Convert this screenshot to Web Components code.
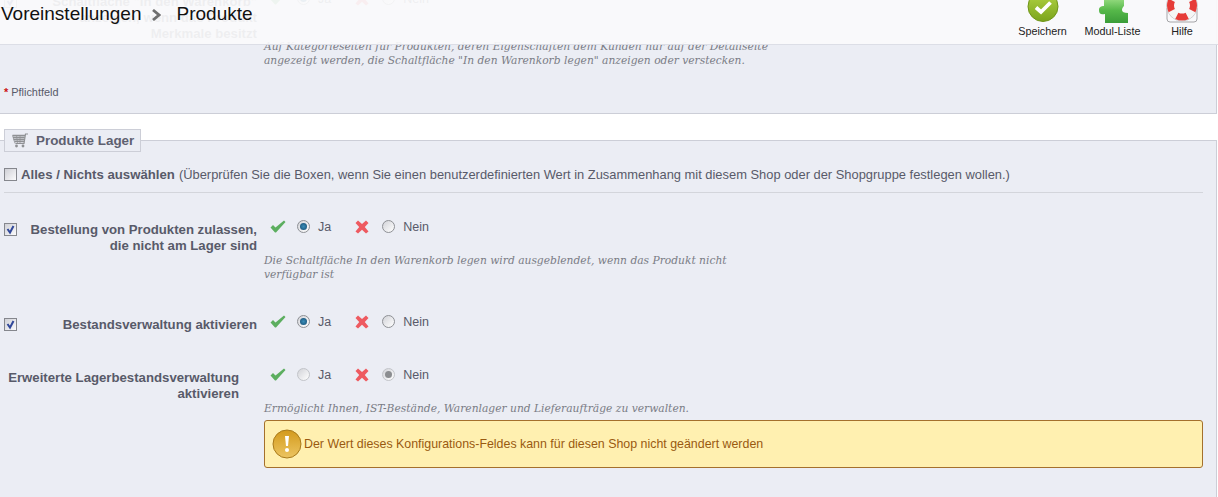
<!DOCTYPE html>
<html>
<head>
<meta charset="utf-8">
<title>Produkte</title>
<style>
  html, body { margin: 0; height: 497px; overflow: hidden; background: #fff; }
  body { font-family: "Liberation Sans", Arial, sans-serif; }
</style>
</head>
<body>
<admin-page>
  <page-toolbar slot="toolbar"></page-toolbar>
  <form-panel flush>
    <form-row checked top label="Schaltfläche &quot;In den Warenkorb&quot; anzeigen, wenn das Produkt<br>Merkmale besitzt" choice="yes" style="--hint-gap:33px"
      hint="Auf Kategorieseiten für Produkten, deren Eigenschaften dem Kunden nur auf der Detailseite angezeigt werden, die Schaltfläche &quot;In den Warenkorb legen&quot; anzeigen oder verstecken."></form-row>
    <required-note></required-note>
  </form-panel>
  <form-panel legend="Produkte Lager">
    <select-all></select-all>
    <form-row checked label="Bestellung von Produkten zulassen, die nicht am Lager sind" choice="yes"
      hint="Die Schaltfläche In den Warenkorb legen wird ausgeblendet, wenn das Produkt nicht verfügbar ist" style="margin-top:25px"></form-row>
    <form-row checked label="Bestandsverwaltung aktivieren" choice="yes" style="margin-top:31px"></form-row>
    <form-row disabled label="Erweiterte Lagerbestandsverwaltung aktivieren" choice="no"
      hint="Ermöglicht Ihnen, IST-Bestände, Warenlager und Lieferaufträge zu verwalten." style="margin-top:33px;--label-pad:18px">
      <warn-box>Der Wert dieses Konfigurations-Feldes kann für diesen Shop nicht geändert werden</warn-box>
    </form-row>
  </form-panel>
</admin-page>

<script>
class AdminPage extends HTMLElement {
  constructor() {
    super();
    this.attachShadow({ mode: 'open' });
    this.shadowRoot.innerHTML = `
      <style>
        :host { display: block; position: relative; height: 497px; overflow: hidden; }
        .content { display: flex; flex-direction: column; gap: 26px; width: 1217px; }
      </style>
      <slot name="toolbar"></slot>
      <div class="content"><slot></slot></div>
    `;
  }
}

class PageToolbar extends HTMLElement {
  constructor() {
    super();
    this.attachShadow({ mode: 'open' });
    this.shadowRoot.innerHTML = `
      <style>
        :host {
          position: absolute; top: 0; left: 0; right: 0; height: 44px; z-index: 5;
          background: rgba(250,250,251,.93); border-bottom: 1px solid #dcdee6;
          display: flex; justify-content: space-between;
        }
        .crumbs { display: flex; align-items: center; height: 28px; font-size: 19px; color: #111; padding-left: 1px; }
        .crumbs svg { margin: 2px 16px 0 9px; }
        .tools { display: flex; }
        .tool { display: flex; flex-direction: column; align-items: center; font-size: 10.8px; color: #222; }
        .tool svg { display: block; height: 23px; }
        .tool span { margin-top: 2px; line-height: 13px; white-space: nowrap; }
      </style>
      <div class="crumbs">Voreinstellungen
        <svg width="10" height="12" viewBox="0 0 10 12"><path d="M2 1 L8 6 L2 11" fill="none" stroke="#6f6f6f" stroke-width="2.8"/></svg>
        Produkte</div>
      <div class="tools">
        <div class="tool" style="width:59px;margin-right:11px">
          <svg width="32" viewBox="0 0 32 23"><defs><linearGradient id="g" x1="0" y1="0" x2="0" y2="1"><stop offset="0" stop-color="#b4d544"/><stop offset="1" stop-color="#7ba41d"/></linearGradient></defs>
            <circle cx="16" cy="6.5" r="15" fill="url(#g)" stroke="#6f9516"/>
            <path d="M9 7.5 L14 12 L23.5 2.5" fill="none" stroke="#fff" stroke-width="3.8"/></svg>
          <span>Speichern</span>
        </div>
        <div class="tool" style="width:59px;margin-right:11px">
          <svg width="32" viewBox="0 0 32 23"><defs><linearGradient id="p" x1="0" y1="0" x2="0" y2="1"><stop offset="0" stop-color="#8ed77a"/><stop offset=".45" stop-color="#56b84a"/><stop offset="1" stop-color="#3b9c38"/></linearGradient></defs>
            <path d="M7 0 H27 V6 C26 7 25 8 25 10 C25 12 27 13 31 13 V23 H8 V14 C4 15 2 14 2 10 C2 7 4 6 7 6 Z" fill="url(#p)"/></svg>
          <span>Modul-Liste</span>
        </div>
        <div class="tool" style="width:58px;margin-right:7px">
          <svg width="32" viewBox="0 0 32 23">
            <path d="M1 8 V19 Q1 22 4 22 H28 Q31 22 31 19 V8" fill="none" stroke="#a5a5a8"/>
            <circle cx="16" cy="5.5" r="15.5" fill="#f4f4f4" stroke="#b9b9bc" stroke-width=".7"/>
            <circle cx="16" cy="5.5" r="11.5" fill="#f8f8f9" stroke="#f5f5f5" stroke-width="7"/>
            <circle cx="16" cy="5.5" r="11.5" fill="none" stroke="#e63c38" stroke-width="7" pathLength="100" stroke-dasharray="15 10" stroke-dashoffset="7.5"/>
          </svg>
          <span>Hilfe</span>
        </div>
      </div>
    `;
  }
}

class FormPanel extends HTMLElement {
  constructor() {
    super();
    this.attachShadow({ mode: 'open' });
    const legend = this.getAttribute('legend');
    this.shadowRoot.innerHTML = `
      <style>
        :host {
          display: block; box-sizing: border-box; background: #ebedf4;
          border-top: 1px solid #ccced7; border-right: 1px solid #ccced7; border-bottom: 1px solid #ccced7;
          padding: 0 0 60px 4px; position: relative;
        }
        :host([flush]) { border-top: 0; height: 114px; overflow: hidden; padding-bottom: 0; }
        .legend {
          display: inline-flex; align-items: center; position: absolute; top: -12px; left: 4px;
          height: 23px; box-sizing: border-box; width: 137px; padding-left: 7px;
          background: #ebedf4; border: 1px solid #ccced7;
          font-size: 13.4px; font-weight: bold; color: #5e6070;
        }
        .legend svg { margin-right: 8px; }
        .legend[hidden] { display: none; }
      </style>
      <div class="legend" ${legend ? '' : 'hidden'}>
        <svg width="16" height="15" viewBox="0 0 16 15" fill="none" stroke="#8f9194">
          <path d="M16 1 H13.5 L12 10.5 H3.5" stroke-width="1.2"/>
          <path d="M0.5 2.5 H13 M1 4.5 H12.8 M1.5 6.5 H12.5 M2.5 8.5 H12.2" stroke-width="1.3"/>
          <path d="M0.5 2.5 L3 10.5 M4.5 2.5 L5.5 10 M8 2.5 L8 10" stroke-width=".7"/>
          <circle cx="4.5" cy="13" r="1.4" fill="#8f9194" stroke="none"/><circle cx="11" cy="13" r="1.4" fill="#8f9194" stroke="none"/>
        </svg>${legend || ''}
      </div>
      <slot></slot>
    `;
  }
}

class SelectAll extends HTMLElement {
  constructor() {
    super();
    this.attachShadow({ mode: 'open' });
    this.shadowRoot.innerHTML = `
      <style>
        :host {
          display: flex; align-items: center; box-sizing: border-box; height: 52px; padding-top: 16px;
          width: 1199px; border-bottom: 1px solid #d3d5db; font-size: 12.9px; color: #585a69;
          white-space: pre;
        }
        b { margin: 0 4px; font-size: 13.2px; }
      </style>
      <check-box></check-box><b>Alles / Nichts auswählen</b><span>(Überprüfen Sie die Boxen, wenn Sie einen benutzerdefinierten Wert in Zusammenhang mit diesem Shop oder der Shopgruppe festlegen wollen.)</span>
    `;
  }
}

class FormRow extends HTMLElement {
  constructor() {
    super();
    this.attachShadow({ mode: 'open' });
    const checked = this.hasAttribute('checked');
    const no = this.getAttribute('choice') === 'no';
    const off = this.hasAttribute('disabled');
    const hint = this.getAttribute('hint');
    this.shadowRoot.innerHTML = `
      <style>
        :host { display: grid; grid-template-columns: 253px 1fr; column-gap: 7px; color: #585a69; }
        :host([top]) { margin-top: -10px; }
        .label { display: flex; gap: 4px; }
        .label b { flex: 1; text-align: right; font-size: 13.2px; line-height: 16px; padding: 4px var(--label-pad, 0) 0 0; }
        check-box { margin-top: 5px; }
        .choice { display: flex; align-items: center; height: 17px; font-size: 12.5px; padding-left: 6px; margin-top: 0; }
        .choice .t { margin-left: 8px; }
        .choice svg { display: block; flex: none; }
        .hint {
          font-family: "DejaVu Serif", Georgia, serif; font-style: italic; font-size: 10.7px; line-height: 14px;
          color: #7a7c85; width: 515px; margin-top: var(--hint-gap, 19px);
        }
        .slot { width: 939px; }
      </style>
      <div class="label">
        ${checked ? '<check-box checked></check-box>' : ''}
        <b>${this.getAttribute('label').replace(/"/g, '&quot;')}</b>
      </div>
      <div>
        <div class="choice">
          <svg width="16" height="13" viewBox="0 0 16 13"><path d="M0.5 7.5 L3 5 L5.5 7.5 L14 0.5 L15.5 2 L6 12.5 L5 12.5 Z" fill="#5cae5f"/></svg>
          <radio-dot style="margin-left:11px" ${no ? '' : 'on'} ${off ? 'off' : ''}></radio-dot>
          <span class="t">Ja</span>
          <svg style="margin-left:24px" width="14" height="14" viewBox="0 0 14 14"><path d="M0.5 3 L3 0.5 L7 4 L11 0.5 L13.5 3 L9.8 7 L13.5 11.5 L11 13.5 L7 9.8 L3 13.5 L0.5 11.5 L4.2 7 Z" fill="#ee5a60"/></svg>
          <radio-dot style="margin-left:13px" ${no ? 'on' : ''} ${off ? 'off' : ''}></radio-dot>
          <span class="t">Nein</span>
        </div>
        ${hint ? `<div class="hint">${hint.replace(/"/g, '&quot;')}</div>` : ''}
        <div class="slot"><slot></slot></div>
      </div>
    `;
  }
}

class CheckBox extends HTMLElement {
  constructor() {
    super();
    this.attachShadow({ mode: 'open' });
    this.shadowRoot.innerHTML = `
      <style>
        :host {
          display: block; flex: none; width: 13px; height: 13px; box-sizing: border-box;
          border: 1px solid #85878d; background: linear-gradient(135deg, #cfd0d6, #fbfbfc);
        }
        svg { display: block; }
      </style>
      ${this.hasAttribute('checked') ? '<svg width="11" height="11" viewBox="0 0 11 11"><path d="M2.5 5 L5 8.5 L8.5 2" fill="none" stroke="#31489a" stroke-width="2"/></svg>' : ''}
    `;
  }
}

class RadioDot extends HTMLElement {
  constructor() {
    super();
    this.attachShadow({ mode: 'open' });
    this.shadowRoot.innerHTML = `
      <style>
        :host {
          display: flex; align-items: center; justify-content: center; flex: none;
          width: 13px; height: 13px; box-sizing: border-box; border-radius: 50%;
          border: 1px solid #8e9095; background: linear-gradient(135deg, #d2d3d8, #fff);
        }
        :host([off]) { border-color: #c2c4c9; }
        i { display: block; width: 7px; height: 7px; border-radius: 50%; background: radial-gradient(circle, #3a8db8, #134a70); }
        :host([off]) i { background: #8b8d90; }
      </style>
      ${this.hasAttribute('on') ? '<i></i>' : ''}
    `;
  }
}

class RequiredNote extends HTMLElement {
  constructor() {
    super();
    this.attachShadow({ mode: 'open' });
    this.shadowRoot.innerHTML = `
      <style>
        :host { display: block; margin: 18px 0 0 0; font-size: 10.9px; line-height: 13px; color: #585a69; }
        span { color: #c11; font-weight: bold; }
      </style>
      <span>*</span> Pflichtfeld
    `;
  }
}

class WarnBox extends HTMLElement {
  constructor() {
    super();
    this.attachShadow({ mode: 'open' });
    this.shadowRoot.innerHTML = `
      <style>
        :host {
          display: flex; align-items: center; gap: 2px; box-sizing: border-box; height: 48px; margin-top: 4px;
          padding-left: 7px; background: #fff0b0; border: 1px solid #a4702c; border-radius: 3px;
          font-size: 12.4px; color: #9a5a10;
        }
        svg { display: block; flex: none; }
      </style>
      <svg width="30" height="30" viewBox="0 0 30 30">
        <defs><linearGradient id="w" x1="0" y1="0" x2="0" y2="1"><stop offset="0" stop-color="#d39a1c"/><stop offset="1" stop-color="#ecc562"/></linearGradient></defs>
        <circle cx="15" cy="15" r="14" fill="url(#w)" stroke="#a97b1c"/>
        <path d="M13 7 H17 L16 17 H14 Z" fill="#fff"/><circle cx="15" cy="21" r="2" fill="#fff"/>
      </svg>
      <span><slot></slot></span>
    `;
  }
}

customElements.define('admin-page', AdminPage);
customElements.define('page-toolbar', PageToolbar);
customElements.define('form-panel', FormPanel);
customElements.define('select-all', SelectAll);
customElements.define('check-box', CheckBox);
customElements.define('radio-dot', RadioDot);
customElements.define('form-row', FormRow);
customElements.define('required-note', RequiredNote);
customElements.define('warn-box', WarnBox);
</script>
</body>
</html>
